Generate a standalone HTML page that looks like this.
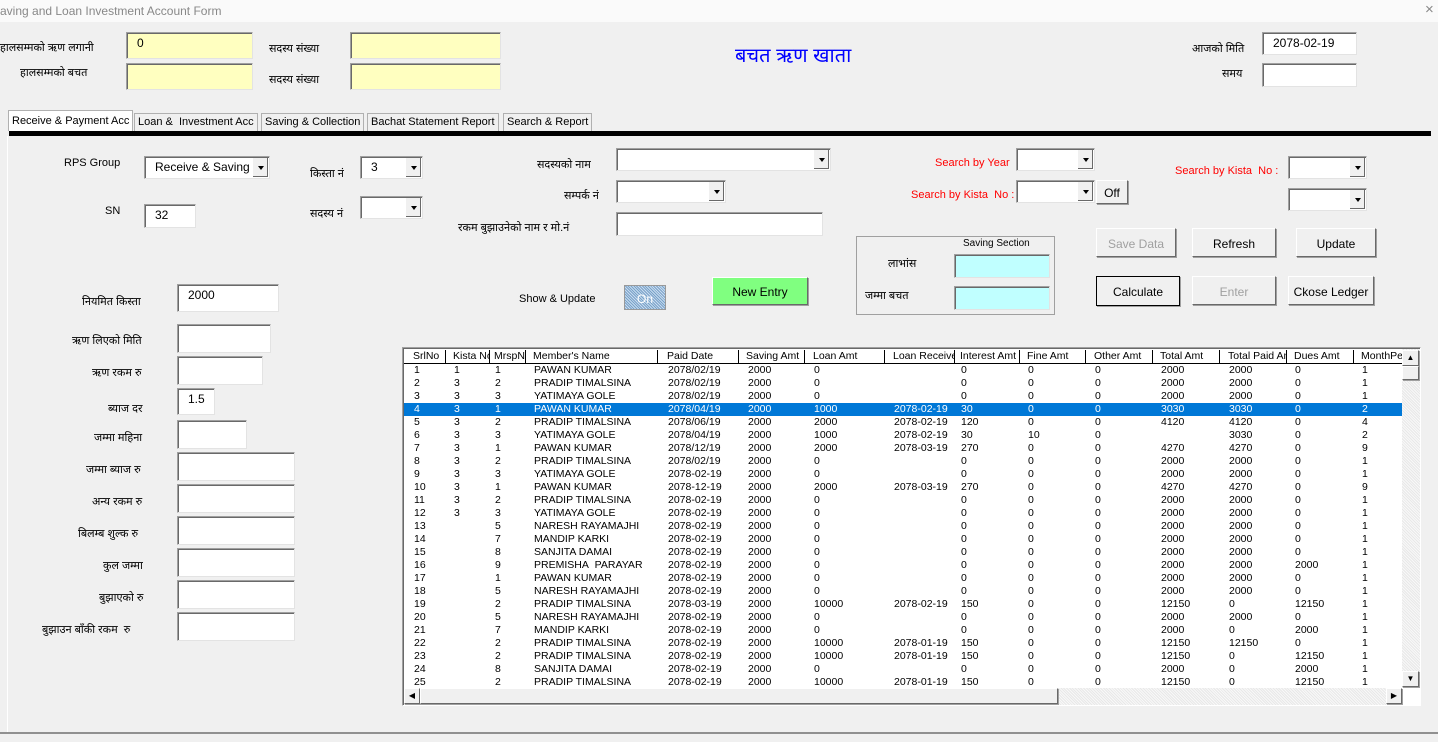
<!DOCTYPE html>
<html><head><meta charset="utf-8"><style>
*{box-sizing:border-box;margin:0;padding:0}
body{width:1438px;height:742px;background:#f0f0f0;font-family:"Liberation Sans",sans-serif;font-size:11px;color:#000;position:relative;overflow:hidden}
.a{position:absolute;white-space:nowrap}
.box{position:absolute;background:#fff;border:1px solid;border-color:#a0a0a0 #e3e3e3 #e3e3e3 #a0a0a0;box-shadow:inset 1px 1px 0 #696969;font-size:12px;padding:3px 0 0 10px}
.y{background:#ffffc0}
.cb{position:absolute;background:#fff;border:1px solid;border-color:#a0a0a0 #e3e3e3 #e3e3e3 #a0a0a0;box-shadow:inset 1px 1px 0 #696969;font-size:12px;padding:3px 0 0 10px}
.cb::after{content:"";position:absolute;right:1px;top:1px;bottom:1px;width:15px;background:#f0f0f0;border-left:1px solid #fff;box-shadow:inset -1px -1px 0 #696969}
.cb::before{content:"";position:absolute;right:5px;top:50%;margin-top:-2px;border-left:3px solid transparent;border-right:3px solid transparent;border-top:4px solid #000;z-index:2}
.btn{position:absolute;background:#f0f0f0;border:1px solid;border-color:#fff #696969 #696969 #fff;box-shadow:1px 1px 0 #a0a0a0;text-align:center;font-size:12px}
.red{color:#ff0000;font-size:11px}
.lbl{font-size:11px;text-align:right}
.tab{position:absolute;top:113px;height:18px;border:1px solid #b0b0b0;border-bottom:none;padding:2px 3px;font-size:11px;background:#f0f0f0}
table{position:absolute;left:404px;top:364px;border-collapse:collapse;table-layout:fixed}
td{height:13px;padding:0 0 0 10px;line-height:13px;font-size:10.5px;overflow:hidden;white-space:nowrap}
tr.s td{background:#0078d7;color:#fff}
.h{position:absolute;top:350px;font-size:10.5px;height:13px;line-height:13px;border-right:1px solid #000;padding-left:9px;overflow:hidden;white-space:nowrap}
</style></head><body>
<div class="a" style="left:0;top:0;width:1438px;height:22px;background:#fafafa"></div>
<div class="a" style="left:0;top:4px;color:#888;font-size:12px">aving and Loan Investment Account Form</div>
<div class="a" style="left:1425px;top:1px;color:#888;font-size:15px">×</div>

<div class="a lbl" style="left:0;top:40px">हालसम्मको ऋण लगानी</div>
<div class="a lbl" style="left:20px;top:65px">हालसम्मको बचत</div>
<div class="box y" style="left:126px;top:32px;width:127px;height:27px">0</div>
<div class="box y" style="left:126px;top:63px;width:127px;height:27px"></div>
<div class="a lbl" style="left:269px;top:41px">सदस्य संख्या</div>
<div class="a lbl" style="left:269px;top:72px">सदस्य संख्या</div>
<div class="box y" style="left:350px;top:32px;width:151px;height:27px"></div>
<div class="box y" style="left:350px;top:63px;width:151px;height:27px"></div>
<div class="a" style="left:735px;top:41px;color:#0000ff;font-size:20px">बचत ऋण खाता</div>
<div class="a lbl" style="left:1192px;top:41px">आजको मिति</div>
<div class="a lbl" style="left:1222px;top:66px">समय</div>
<div class="box" style="left:1262px;top:32px;width:95px;height:23px">2078-02-19</div>
<div class="box" style="left:1262px;top:63px;width:95px;height:24px"></div>

<div class="tab" style="left:8px;top:110px;height:21px;background:#fff;padding-top:4px">Receive &amp; Payment Acc</div>
<div class="tab" style="left:134px">Loan &amp;&nbsp; Investment Acc</div>
<div class="tab" style="left:261px">Saving &amp; Collection</div>
<div class="tab" style="left:367px">Bachat Statement Report</div>
<div class="tab" style="left:503px">Search &amp; Report</div>
<div class="a" style="left:9px;top:131px;width:1422px;height:5px;background:#000"></div>
<div class="a" style="left:7px;top:136px;width:1px;height:597px;background:#fff"></div>
<div class="a" style="left:0;top:732px;width:1438px;height:2px;background:#909090"></div>

<div class="a lbl" style="left:64px;top:157px">RPS Group</div>
<div class="cb" style="left:144px;top:156px;width:126px;height:23px">Receive &amp; Saving</div>
<div class="a lbl" style="left:310px;top:166px">किस्ता नं</div>
<div class="cb" style="left:360px;top:156px;width:63px;height:23px">3</div>
<div class="a lbl" style="left:105px;top:205px">SN</div>
<div class="box" style="left:144px;top:204px;width:52px;height:24px">32</div>
<div class="a lbl" style="left:310px;top:206px">सदस्य नं</div>
<div class="cb" style="left:360px;top:196px;width:63px;height:23px"></div>
<div class="a lbl" style="left:537px;top:157px">सदस्यको नाम</div>
<div class="cb" style="left:616px;top:148px;width:215px;height:23px"></div>
<div class="a lbl" style="left:564px;top:188px">सम्पर्क नं</div>
<div class="cb" style="left:616px;top:180px;width:110px;height:23px"></div>
<div class="a lbl" style="left:458px;top:220px">रकम बुझाउनेको नाम र मो.नं</div>
<div class="box" style="left:616px;top:212px;width:207px;height:24px"></div>

<div class="a red" style="left:935px;top:157px">Search by Year</div>
<div class="cb" style="left:1016px;top:148px;width:79px;height:23px"></div>
<div class="a red" style="left:911px;top:189px">Search by Kista&nbsp; No :</div>
<div class="cb" style="left:1016px;top:180px;width:79px;height:23px"></div>
<div class="btn" style="left:1096px;top:180px;width:32px;height:24px;padding-top:5px">Off</div>
<div class="a red" style="left:1175px;top:165px">Search by Kista&nbsp; No :</div>
<div class="cb" style="left:1288px;top:156px;width:79px;height:23px"></div>
<div class="cb" style="left:1288px;top:188px;width:79px;height:23px"></div>

<div class="a" style="left:856px;top:236px;width:199px;height:79px;border:1px solid #a0a0a0"></div>
<div class="a" style="left:963px;top:238px;font-size:10px">Saving Section</div>
<div class="a lbl" style="left:888px;top:256px">लाभांस</div>
<div class="a lbl" style="left:865px;top:288px">जम्मा बचत</div>
<div class="box" style="left:954px;top:254px;width:96px;height:24px;background:#c0ffff"></div>
<div class="box" style="left:954px;top:286px;width:96px;height:24px;background:#c0ffff"></div>

<div class="btn" style="left:1096px;top:228px;width:80px;height:29px;padding-top:8px;color:#a0a0a0">Save Data</div>
<div class="btn" style="left:1192px;top:228px;width:84px;height:29px;padding-top:8px">Refresh</div>
<div class="btn" style="left:1296px;top:228px;width:80px;height:29px;padding-top:8px">Update</div>
<div class="btn" style="left:1096px;top:276px;width:84px;height:30px;padding-top:8px;border:1px solid #000">Calculate</div>
<div class="btn" style="left:1192px;top:276px;width:84px;height:29px;padding-top:8px;color:#a0a0a0">Enter</div>
<div class="btn" style="left:1288px;top:276px;width:86px;height:29px;padding-top:8px">Ckose Ledger</div>

<div class="a lbl" style="left:519px;top:293px">Show &amp; Update</div>
<div class="a" style="left:624px;top:285px;width:42px;height:25px;background:repeating-linear-gradient(45deg,#7aa2c8 0 1px,#c8dcf0 1px 2px);border:1px solid #999;color:#fff;text-align:center;padding-top:6px;font-size:12px">On</div>
<div class="btn" style="left:712px;top:277px;width:96px;height:28px;background:#80ff80;padding-top:7px">New Entry</div>

<div class="a lbl" style="left:82px;top:294px">नियमित किस्ता</div>
<div class="box" style="left:177px;top:284px;width:102px;height:28px">2000</div>
<div class="a lbl" style="left:72px;top:333px">ऋण लिएको मिति</div>
<div class="box" style="left:177px;top:324px;width:94px;height:29px"></div>
<div class="a lbl" style="left:92px;top:365px">ऋण रकम रु</div>
<div class="box" style="left:177px;top:356px;width:86px;height:29px"></div>
<div class="a lbl" style="left:108px;top:401px">ब्याज दर</div>
<div class="box" style="left:177px;top:388px;width:38px;height:27px">1.5</div>
<div class="a lbl" style="left:94px;top:430px">जम्मा महिना</div>
<div class="box" style="left:177px;top:420px;width:70px;height:29px"></div>
<div class="a lbl" style="left:86px;top:462px">जम्मा ब्याज रु</div>
<div class="box" style="left:177px;top:452px;width:118px;height:29px"></div>
<div class="a lbl" style="left:92px;top:494px">अन्य रकम रु</div>
<div class="box" style="left:177px;top:484px;width:118px;height:29px"></div>
<div class="a lbl" style="left:78px;top:526px">बिलम्ब शुल्क रु</div>
<div class="box" style="left:177px;top:516px;width:118px;height:29px"></div>
<div class="a lbl" style="left:103px;top:558px">कुल जम्मा</div>
<div class="box" style="left:177px;top:548px;width:118px;height:29px"></div>
<div class="a lbl" style="left:99px;top:590px">बुझाएको रु</div>
<div class="box" style="left:177px;top:580px;width:118px;height:29px"></div>
<div class="a lbl" style="left:42px;top:622px">बुझाउन बाँकी रकम&nbsp; रु</div>
<div class="box" style="left:177px;top:612px;width:118px;height:29px"></div>

<div class="a" style="left:402px;top:347px;width:1019px;height:359px;background:#fff;border:1px solid;border-color:#a0a0a0 #fff #fff #a0a0a0;box-shadow:inset 1px 1px 0 #696969"></div>
<div class="a" style="left:404px;top:363px;width:998px;height:1px;background:#000"></div>
<div class="h" style="left:404px;width:42px">SrlNo</div>
<div class="h" style="left:446px;width:44px;padding-left:7px">Kista No</div>
<div class="h" style="left:490px;width:36px;padding-left:4px">MrspNo</div>
<div class="h" style="left:526px;width:132px;padding-left:7px">Member's Name</div>
<div class="h" style="left:658px;width:81px">Paid Date</div>
<div class="h" style="left:739px;width:66px;padding-left:7px">Saving Amt</div>
<div class="h" style="left:805px;width:80px;padding-left:8px">Loan Amt</div>
<div class="h" style="left:885px;width:70px;padding-left:8px">Loan Receive</div>
<div class="h" style="left:955px;width:65px;padding-left:5px">Interest Amt</div>
<div class="h" style="left:1020px;width:66px;padding-left:7px">Fine Amt</div>
<div class="h" style="left:1086px;width:67px;padding-left:8px">Other Amt</div>
<div class="h" style="left:1153px;width:67px;padding-left:7px">Total Amt</div>
<div class="h" style="left:1220px;width:67px;padding-left:8px">Total Paid Amt</div>
<div class="h" style="left:1287px;width:67px;padding-left:7px">Dues Amt</div>
<div class="h" style="left:1354px;width:48px;padding-left:7px;border:none">MonthPeriod</div>

<table>
<colgroup><col style="width:40px"><col style="width:41px"><col style="width:39px"><col style="width:134px"><col style="width:80px"><col style="width:66px"><col style="width:80px"><col style="width:67px"><col style="width:67px"><col style="width:67px"><col style="width:66px"><col style="width:68px"><col style="width:66px"><col style="width:67px"><col style="width:50px"></colgroup>
<tr><td>1</td><td>1</td><td>1</td><td>PAWAN KUMAR</td><td>2078/02/19</td><td>2000</td><td>0</td><td></td><td>0</td><td>0</td><td>0</td><td>2000</td><td>2000</td><td>0</td><td>1</td></tr>
<tr><td>2</td><td>3</td><td>2</td><td>PRADIP TIMALSINA</td><td>2078/02/19</td><td>2000</td><td>0</td><td></td><td>0</td><td>0</td><td>0</td><td>2000</td><td>2000</td><td>0</td><td>1</td></tr>
<tr><td>3</td><td>3</td><td>3</td><td>YATIMAYA GOLE</td><td>2078/02/19</td><td>2000</td><td>0</td><td></td><td>0</td><td>0</td><td>0</td><td>2000</td><td>2000</td><td>0</td><td>1</td></tr>
<tr class="s"><td>4</td><td>3</td><td>1</td><td>PAWAN KUMAR</td><td>2078/04/19</td><td>2000</td><td>1000</td><td>2078-02-19</td><td>30</td><td>0</td><td>0</td><td>3030</td><td>3030</td><td>0</td><td>2</td></tr>
<tr><td>5</td><td>3</td><td>2</td><td>PRADIP TIMALSINA</td><td>2078/06/19</td><td>2000</td><td>2000</td><td>2078-02-19</td><td>120</td><td>0</td><td>0</td><td>4120</td><td>4120</td><td>0</td><td>4</td></tr>
<tr><td>6</td><td>3</td><td>3</td><td>YATIMAYA GOLE</td><td>2078/04/19</td><td>2000</td><td>1000</td><td>2078-02-19</td><td>30</td><td>10</td><td>0</td><td></td><td>3030</td><td>0</td><td>2</td></tr>
<tr><td>7</td><td>3</td><td>1</td><td>PAWAN KUMAR</td><td>2078/12/19</td><td>2000</td><td>2000</td><td>2078-03-19</td><td>270</td><td>0</td><td>0</td><td>4270</td><td>4270</td><td>0</td><td>9</td></tr>
<tr><td>8</td><td>3</td><td>2</td><td>PRADIP TIMALSINA</td><td>2078/02/19</td><td>2000</td><td>0</td><td></td><td>0</td><td>0</td><td>0</td><td>2000</td><td>2000</td><td>0</td><td>1</td></tr>
<tr><td>9</td><td>3</td><td>3</td><td>YATIMAYA GOLE</td><td>2078-02-19</td><td>2000</td><td>0</td><td></td><td>0</td><td>0</td><td>0</td><td>2000</td><td>2000</td><td>0</td><td>1</td></tr>
<tr><td>10</td><td>3</td><td>1</td><td>PAWAN KUMAR</td><td>2078-12-19</td><td>2000</td><td>2000</td><td>2078-03-19</td><td>270</td><td>0</td><td>0</td><td>4270</td><td>4270</td><td>0</td><td>9</td></tr>
<tr><td>11</td><td>3</td><td>2</td><td>PRADIP TIMALSINA</td><td>2078-02-19</td><td>2000</td><td>0</td><td></td><td>0</td><td>0</td><td>0</td><td>2000</td><td>2000</td><td>0</td><td>1</td></tr>
<tr><td>12</td><td>3</td><td>3</td><td>YATIMAYA GOLE</td><td>2078-02-19</td><td>2000</td><td>0</td><td></td><td>0</td><td>0</td><td>0</td><td>2000</td><td>2000</td><td>0</td><td>1</td></tr>
<tr><td>13</td><td></td><td>5</td><td>NARESH RAYAMAJHI</td><td>2078-02-19</td><td>2000</td><td>0</td><td></td><td>0</td><td>0</td><td>0</td><td>2000</td><td>2000</td><td>0</td><td>1</td></tr>
<tr><td>14</td><td></td><td>7</td><td>MANDIP KARKI</td><td>2078-02-19</td><td>2000</td><td>0</td><td></td><td>0</td><td>0</td><td>0</td><td>2000</td><td>2000</td><td>0</td><td>1</td></tr>
<tr><td>15</td><td></td><td>8</td><td>SANJITA DAMAI</td><td>2078-02-19</td><td>2000</td><td>0</td><td></td><td>0</td><td>0</td><td>0</td><td>2000</td><td>2000</td><td>0</td><td>1</td></tr>
<tr><td>16</td><td></td><td>9</td><td>PREMISHA&nbsp; PARAYAR</td><td>2078-02-19</td><td>2000</td><td>0</td><td></td><td>0</td><td>0</td><td>0</td><td>2000</td><td>2000</td><td>2000</td><td>1</td></tr>
<tr><td>17</td><td></td><td>1</td><td>PAWAN KUMAR</td><td>2078-02-19</td><td>2000</td><td>0</td><td></td><td>0</td><td>0</td><td>0</td><td>2000</td><td>2000</td><td>0</td><td>1</td></tr>
<tr><td>18</td><td></td><td>5</td><td>NARESH RAYAMAJHI</td><td>2078-02-19</td><td>2000</td><td>0</td><td></td><td>0</td><td>0</td><td>0</td><td>2000</td><td>2000</td><td>0</td><td>1</td></tr>
<tr><td>19</td><td></td><td>2</td><td>PRADIP TIMALSINA</td><td>2078-03-19</td><td>2000</td><td>10000</td><td>2078-02-19</td><td>150</td><td>0</td><td>0</td><td>12150</td><td>0</td><td>12150</td><td>1</td></tr>
<tr><td>20</td><td></td><td>5</td><td>NARESH RAYAMAJHI</td><td>2078-02-19</td><td>2000</td><td>0</td><td></td><td>0</td><td>0</td><td>0</td><td>2000</td><td>2000</td><td>0</td><td>1</td></tr>
<tr><td>21</td><td></td><td>7</td><td>MANDIP KARKI</td><td>2078-02-19</td><td>2000</td><td>0</td><td></td><td>0</td><td>0</td><td>0</td><td>2000</td><td>0</td><td>2000</td><td>1</td></tr>
<tr><td>22</td><td></td><td>2</td><td>PRADIP TIMALSINA</td><td>2078-02-19</td><td>2000</td><td>10000</td><td>2078-01-19</td><td>150</td><td>0</td><td>0</td><td>12150</td><td>12150</td><td>0</td><td>1</td></tr>
<tr><td>23</td><td></td><td>2</td><td>PRADIP TIMALSINA</td><td>2078-02-19</td><td>2000</td><td>10000</td><td>2078-01-19</td><td>150</td><td>0</td><td>0</td><td>12150</td><td>0</td><td>12150</td><td>1</td></tr>
<tr><td>24</td><td></td><td>8</td><td>SANJITA DAMAI</td><td>2078-02-19</td><td>2000</td><td>0</td><td></td><td>0</td><td>0</td><td>0</td><td>2000</td><td>0</td><td>2000</td><td>1</td></tr>
<tr><td>25</td><td></td><td>2</td><td>PRADIP TIMALSINA</td><td>2078-02-19</td><td>2000</td><td>10000</td><td>2078-01-19</td><td>150</td><td>0</td><td>0</td><td>12150</td><td>0</td><td>12150</td><td>1</td></tr>
</table>

<div class="a" style="left:1402px;top:349px;width:18px;height:339px;background:repeating-linear-gradient(45deg,#e8e8e8 0 1px,#f8f8f8 1px 2px)"></div>
<div class="btn" style="left:1402px;top:350px;width:17px;height:16px;font-size:8px;line-height:14px">▲</div>
<div class="btn" style="left:1402px;top:366px;width:17px;height:14px"></div>
<div class="btn" style="left:1402px;top:671px;width:17px;height:16px;font-size:8px;line-height:14px">▼</div>
<div class="a" style="left:404px;top:688px;width:998px;height:17px;background:repeating-linear-gradient(45deg,#e8e8e8 0 1px,#f8f8f8 1px 2px)"></div>
<div class="btn" style="left:404px;top:688px;width:16px;height:16px;font-size:8px;line-height:14px">◀</div>
<div class="btn" style="left:420px;top:688px;width:638px;height:16px"></div>
<div class="btn" style="left:1386px;top:688px;width:16px;height:16px;font-size:8px;line-height:14px">▶</div>
</body></html>
